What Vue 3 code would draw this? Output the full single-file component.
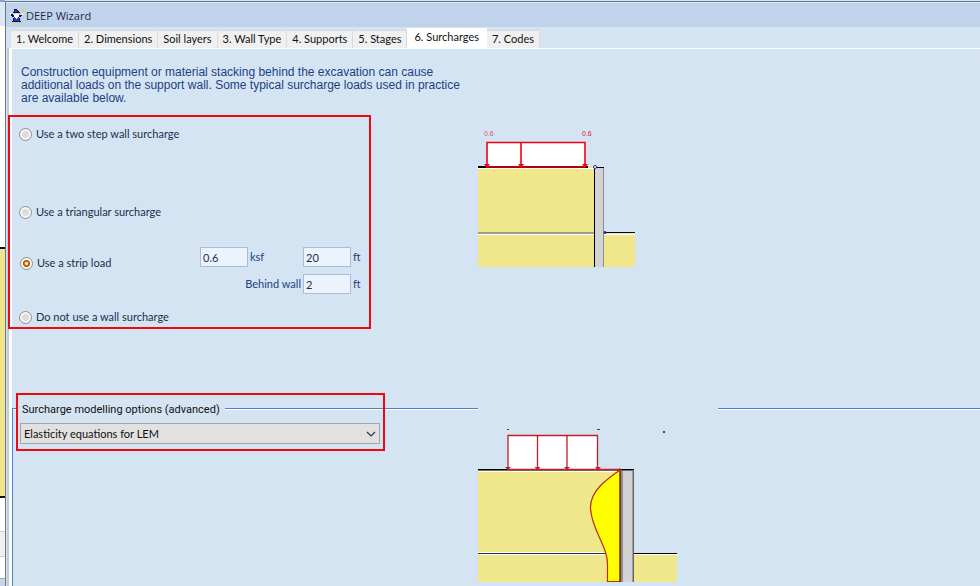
<script setup>
import { ref } from 'vue'

const tabs = ['1. Welcome', '2. Dimensions', 'Soil layers', '3. Wall Type', '4. Supports', '5. Stages', '6. Surcharges', '7. Codes']
const active = ref('6. Surcharges')
const surcharge = ref('strip')
const pressure = ref('0.6')
const stripWidth = ref('20')
const offset = ref('2')
const method = ref('lem')
</script>

<template>
  <div class="desktop">
    <div class="behind" aria-hidden="true">
      <i class="b-top"></i><i class="b-air"></i><i class="b-soil"></i><i class="b-white"></i><i class="b-grey"></i><i class="b-foot"></i>
    </div>
    <div class="window">
      <header class="titlebar">
        <svg class="logo" width="14" height="15" viewBox="0 0 14 15" shape-rendering="crispEdges">
          <path fill="#10104a" d="M4 0h3v1h1v1h1v1h1v1h-7v-1h1zM1 5h2v1h1v2h-2v-1h-1zM9 6h3v1h-1v1h-2zM3 9h1v3h-1zM9 9h1v3h-1zM2 12h9v1h-9z" />
          <path fill="#1a3ce8" d="M5 1h2v2h-2zM4 8h5v4h-5z" />
          <path fill="#f4c9a0" d="M5 4h4v1h-4z" />
          <path fill="#fff" d="M4 5h5v3h-1v1h-1v1h-1v-1h-1v-1h-1zM0 4h1v2h-1zM12 4h1v2h-1z" />
          <path fill="#f5d400" d="M12 0h1v1h1v1h-1v1h-1v-1h-1v-1h1zM3 13h3v1h-3zM8 13h3v1h-3z" />
        </svg>
        <h1>DEEP Wizard</h1>
      </header>
      <nav class="tabs" role="tablist">
        <button v-for="t in tabs" :key="t" type="button" role="tab" :aria-selected="t === active" :class="{ active: t === active }" @click="active = t">{{ t }}</button>
      </nav>

      <main class="page">
        <div class="upper">
          <div class="choices">
            <p class="intro">Construction equipment or material stacking behind the excavation can cause additional loads on the support wall. Some typical surcharge loads used in practice are available below.</p>
            <div class="kinds" role="radiogroup" aria-label="Wall surcharge">
              <label class="kind two"><input v-model="surcharge" type="radio" name="kind" value="two" />Use a two step wall surcharge</label>
              <label class="kind tri"><input v-model="surcharge" type="radio" name="kind" value="tri" />Use a triangular surcharge</label>
              <div class="strip">
                <label class="kind"><input v-model="surcharge" type="radio" name="kind" value="strip" />Use a strip load</label>
                <div class="values">
                  <input id="pressure" v-model="pressure" type="text" />
                  <label class="unit" for="pressure">ksf</label>
                  <input id="width" v-model="stripWidth" type="text" />
                  <label class="unit" for="width">ft</label>
                  <label class="before" for="offset">Behind wall</label>
                  <input id="offset" v-model="offset" type="text" />
                  <span class="unit">ft</span>
                </div>
              </div>
              <label class="kind"><input v-model="surcharge" type="radio" name="kind" value="none" />Do not use a wall surcharge</label>
            </div>
          </div>
          <svg class="fig-one" width="158" height="143" viewBox="478 125 158 143">
            <path fill="#f0e68c" d="M478 167h116v100h-116zM604 233h31v34h-31z" />
            <path fill="#fff" d="M487 143h98v23h-98zM478 168h116v1h-116zM604 234h31v1h-31zM478 232h116v3h-116z" />
            <path fill="#a09a98" d="M478 232h116v2h-116z" />
            <path fill="#000" d="M478 166h110v2h-110zM594 167h10v1h-10z" />
            <path fill="#d3d3d3" d="M595 168h8v99h-8z" />
            <path fill="#000" d="M594 167h1v100h-1z" />
            <path fill="#8c8c8c" d="M603 168h1v99h-1z" />
            <path fill="#000050" d="M604 232h31v1h-31z" />
            <path fill="none" stroke="#f00014" stroke-width="1.6" d="M487 167v-24.500h98v24.500M521 143v24M486 167h99" />
            <path fill="#f00014" d="M484 164h6l-3 4zM518 164h6l-3 4zM582 164h6l-3 4z" />
            <circle cx="595" cy="167" r="1.500" fill="#fff" stroke="#2424b0" />
            <circle cx="605" cy="232.500" r="1.500" fill="#2424b0" />
            <text x="484" y="136" class="load faint">0.6</text>
            <text x="582" y="136" class="load">0.6</text>
          </svg>
        </div>

        <section class="model">
          <div class="options">
            <div class="legend"><label for="method">Surcharge modelling options (advanced)</label></div>
            <div class="combo">
              <select id="method" v-model="method"><option value="lem">Elasticity equations for LEM</option></select>
              <svg width="10" height="6" viewBox="0 0 10 6"><path fill="none" stroke="#333" stroke-width="1.200" d="M1 1l4 4 4-4" /></svg>
            </div>
          </div>
          <svg class="fig-two" width="240" height="182" viewBox="478 400 240 182">
            <path fill="#f0e68c" d="M478 470h142v112h-142zM634 554h43v28h-43z" />
            <path fill="#fff" d="M508 436h90v33h-90zM478 471h142v1h-142zM478 552h142v1h-142zM478 554h142v1h-142zM634 554h43v1h-43z" />
            <path fill="#302c40" d="M478 553h142v1h-142z" />
            <path fill="#000" d="M478 469h156v1.500h-156zM634 553h43v1h-43z" />
            <path fill="#ff0" stroke="#b03010" stroke-width="1.200" d="M620 470C607 479 590 491 590.500 508C591 529 608 546 607.500 565V581.500H620z" />
            <path fill="#d3d3d3" d="M621 471h13v111h-13z" />
            <path fill="#8d8d9a" d="M621 471h2v111h-2z" />
            <path fill="#7a3320" d="M619.500 470h1.500v112h-1.500z" />
            <path fill="#666" d="M632.500 470h1.500v112h-1.500z" />
            <path fill="none" stroke="#bd1f2b" stroke-width="1.300" d="M508 469v-33.500h89.500v33.500M537.500 436v33M567 436v33M508 469.500h112" />
            <path fill="#bd1f2b" d="M505 467h6l-3 3zM534.500 467h6l-3 3zM564 467h6l-3 3zM595 467h6l-3 3zM617 471l3-3 1 3z" />
            <path fill="#445" d="M507 429h2v1h-2zM597 429h3v1h-3zM663 431h2v2h-2z" />
          </svg>
          <i class="rule"></i>
        </section>
      </main>
    </div>
  </div>
</template>

<style>
body {
  background: #d5e4f2;
}
</style>

<style scoped>
*,
*::before,
*::after {
  box-sizing: border-box;
}
.desktop {
  display: flex;
  min-height: 100vh;
  font: 11px/14px Lato, "Liberation Sans", sans-serif;
  color: #1b2f50;
}
.behind {
  display: flex;
  flex: none;
  flex-direction: column;
  width: 5px;
  background: #fff;
}
.b-top { height: 26px; background: #dbe8f5; border-top: 2px solid #8fa0b5; }
.b-air { height: 221px; }
.b-soil { height: 251px; background: #f0e68c; border: solid #111; border-width: 2px 0; }
.b-white { height: 33px; }
.b-grey { height: 26px; background: #f0f0f0; border: solid #ccc; border-width: 1px 0; }
.b-foot { margin-top: 21px; flex: 1; background: #c5d6ea; border-top: 1px solid #aaa; }
.window {
  display: flex;
  flex: 1;
  flex-direction: column;
  min-width: 0;
  margin-top: 1px;
  border: solid #68788c;
  border-width: 1px 0 0 1px;
  background: #d5e4f2;
}
.titlebar {
  display: flex;
  align-items: center;
  gap: 2px;
  height: 25px;
  padding: 2px 0 0 4px;
  background: #c1d3ea;
  border-top: 1px solid #dbe8f5;
}
h1 {
  margin: 0;
  font: 400 11px/16px "Open Sans", "Noto Sans", sans-serif;
  color: #1c2c48;
}
.tabs {
  display: flex;
  align-items: flex-end;
  height: 21px;
  padding-left: 5px;
}
.tabs button {
  height: 18px;
  padding: 0 5px 2px;
  border: 1px solid #dadada;
  border-left: 0;
  border-bottom: 0;
  background: #f0f0f0;
  color: #111;
  font: inherit;
}
.tabs button.active {
  height: 20px;
  padding: 0 7px 4px;
  background: #fff;
  border-color: #fff;
}
.page {
  display: flex;
  flex: 1;
  flex-direction: column;
  border: solid #fff;
  border-width: 1px 0 0 3px;
  margin-left: 3px;
  box-shadow: -2px 0 0 #c3cbd6;
}
.upper {
  display: flex;
  align-items: flex-start;
  height: 351px;
}
.choices {
  flex: none;
  width: 466px;
}
.intro {
  margin: 0;
  padding: 17px 0 0 9px;
  font: 12px/13px "Liberation Sans", sans-serif;
  color: #1d3f85;
}
.kinds {
  width: 363px;
  margin: 10px 0 0 -4px;
  padding: 7px 0 0 9px;
  border: 2px solid #ee0810;
}
.kind {
  display: flex;
  align-items: center;
  gap: 4px;
  height: 20px;
}
.two { margin-bottom: 58px; }
.tri { margin-bottom: 25px; }
.kind input {
  appearance: none;
  width: 13px;
  height: 13px;
  margin: 0;
  border: 1px solid #8e8f8f;
  border-radius: 50%;
  background: radial-gradient(circle, #dcdcdc 0 3px, #f6f6f6 4px);
}
.kind input:checked {
  background: radial-gradient(circle, #ffe9a0 0 1px, #d87a10 2px, #a34a08 3px, #f6f6f6 4px);
}
.strip {
  display: flex;
  justify-content: space-between;
  margin-bottom: 13px;
}
.strip .kind {
  margin: 6px 0 0 1px;
}
.values {
  display: grid;
  grid-template-columns: 48px 55px 48px 18px;
  grid-auto-rows: 20px;
  row-gap: 7px;
  align-items: center;
  color: #1d3f85;
}
.values input {
  width: 48px;
  height: 20px;
  padding: 0 2px;
  border: 1px solid #a9bdd9;
  background: #ebf3fc;
  color: #1b2f50;
  font: inherit;
}
.unit {
  padding-left: 2px;
}
.before {
  grid-column: span 2;
  padding-right: 2px;
  text-align: right;
}
.fig-one {
  flex: none;
  margin-top: 76px;
}
.load {
  font: 7px "Liberation Sans", sans-serif;
  fill: #e02030;
}
.faint {
  opacity: 0.7;
}
.model {
  display: flex;
  flex: 1;
  align-items: flex-start;
}
.options {
  position: relative;
  flex: none;
  width: 466px;
  align-self: stretch;
  margin-top: 8px;
  border-left: 1px solid #4a86bb;
}
.options::after {
  content: "";
  position: absolute;
  top: -15px;
  left: 3px;
  width: 369px;
  height: 58px;
  border: 2px solid #ee0810;
  pointer-events: none;
}
.legend {
  display: flex;
  align-items: center;
  gap: 5px;
  height: 16px;
  margin-top: -7px;
  color: #111;
}
.legend label {
  padding-top: 2px;
  font-family: Roboto, "Liberation Sans", sans-serif;
}
.legend::before,
.legend::after,
.rule {
  height: 2px;
  background: linear-gradient(#4a86bb 50%, #fff 50%);
}
.legend::before,
.legend::after {
  content: "";
}
.legend::before {
  width: 4px;
}
.legend::after,
.rule {
  flex: 1;
}
.rule {
  margin-top: 8px;
}
.combo {
  display: grid;
  align-items: center;
  width: 360px;
  margin: 6px 0 0 7px;
}
.combo > * {
  grid-area: 1 / 1;
}
select {
  appearance: none;
  width: 100%;
  height: 21px;
  padding: 0 3px;
  border: 1px solid #a5a5a5;
  border-radius: 0;
  background: #e1e1e1;
  color: #111;
  font: inherit;
}
.combo svg {
  justify-self: end;
  margin-right: 4px;
  pointer-events: none;
}
</style>
